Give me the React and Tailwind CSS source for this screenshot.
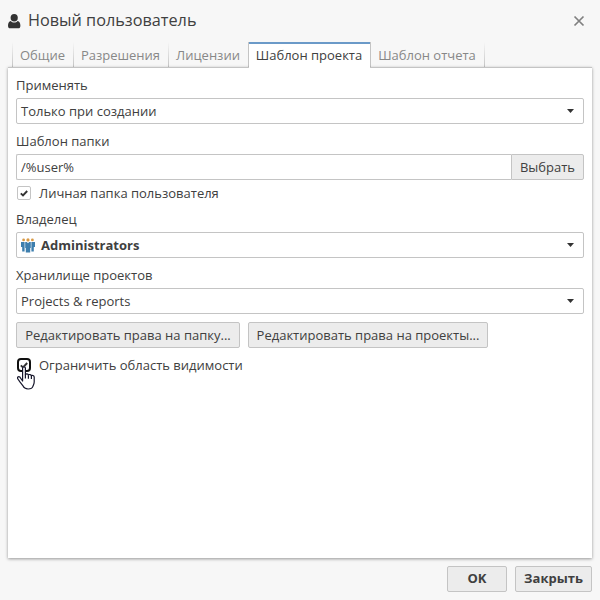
import { useState } from "react";

const tabs = [
  { label: "Общие", width: "w-[61px]" },
  { label: "Разрешения", width: "w-[95px]" },
  { label: "Лицензии", width: "w-[80px]" },
  { label: "Шаблон проекта", width: "w-[122px]" },
  { label: "Шаблон отчета", width: "w-[114px]" },
];

const UserIcon = () => (
  <svg width="13" height="15" viewBox="0 0 13 15" fill="#333" className="shrink-0">
    <ellipse cx="6.2" cy="3.8" rx="3.6" ry="3.8" />
    <path d="M2.8 7C1 7.4 0 9.2 0 11.7c0 1.6.8 2.6 2.1 2.6h8.2c1.3 0 2.1-1 2.1-2.6 0-2.5-1-4.3-2.8-4.7-1 1-2 1.5-3.4 1.5S3.8 8 2.8 7z" />
  </svg>
);

const GroupIcon = () => (
  <svg width="14" height="15" viewBox="0 0 14 15" className="mr-1.5 shrink-0">
    <g fill="#d99a45">
      <circle cx="2.6" cy="1.9" r="1.4" />
      <circle cx="11.4" cy="1.9" r="1.4" />
      <circle cx="7" cy="1.9" r="1.6" />
    </g>
    <g fill="#3e7fae">
      <path d="M0 4h3.6v9.5H1.2V9H0zM14 4h-3.6v9.5h2.4V9H14z" />
      <path d="M4.2 4h1.6L7 5.3 8.2 4h1.6v6h-.6v4.5H4.8V10h-.6z" />
    </g>
  </svg>
);

const HandCursor = () => (
  <svg
    width="19"
    height="24"
    viewBox="0 0 19 24"
    className="pointer-events-none absolute left-px top-[14px]"
  >
    <path
      d="M5.6 15V2.2c0-1.9 2.8-1.9 2.8 0v6.5c.4-1.2 2.8-1 3 .4.5-1 2.8-.7 3 .7.6-.8 2.8-.3 2.8 1.3v5c0 2-.8 2.7-1.3 4.3-.5 1.7-2.2 2.6-4.8 2.6-2.7 0-4.4-1.3-5.3-3.4L2.9 15.9.9 13c-1.1-1.6.5-3 2-1.9z"
      fill="#fff"
      stroke="#15152a"
      strokeWidth="1.2"
      strokeLinejoin="round"
    />
    <path d="M8.4 8.5v4M11.4 9.3v3.4M14.4 10v3" stroke="#15152a" strokeWidth="1.2" />
  </svg>
);

const Field = ({ label, children }) => (
  <div>
    <div className="h-[26px] pt-1 leading-[18px]">{label}</div>
    {children}
  </div>
);

const Select = ({ children }) => (
  <button className="flex h-[26px] w-full items-center rounded-[2px] border border-[#c4c4c4] bg-white pl-1 pr-[9px] text-left">
    {children}
    <svg width="7" height="4" viewBox="0 0 7 4" className="ml-auto">
      <path d="M0 0h7L3.5 4z" fill="#333" />
    </svg>
  </button>
);

const Checkbox = ({ label, checked, onChange, focused, children }) => (
  <label className="relative flex h-[26px] items-center pl-px">
    <input type="checkbox" className="sr-only" checked={checked} onChange={onChange} />
    <span
      className={`flex size-[14px] items-center justify-center bg-white ${
        focused
          ? "rounded-[4px] border-2 border-[#101010]"
          : "rounded-[2px] border border-[#c4c4c4]"
      }`}
    >
      {checked && (
        <svg width="8" height="7" viewBox="0 0 8 7" className="shrink-0">
          <path d="M.8 3.4 3 5.5 7.2 1" fill="none" stroke="#333" strokeWidth="1.9" />
        </svg>
      )}
    </span>
    <span className="ml-2">{label}</span>
    {children}
  </label>
);

const Button = ({ className = "", children }) => (
  <button
    className={`h-[26px] whitespace-nowrap rounded-[2px] border border-[#c4c4c4] bg-[#ececec] ${className}`}
  >
    {children}
  </button>
);

const App = () => {
  const [activeTab, setActiveTab] = useState(3);
  const [personalFolder, setPersonalFolder] = useState(true);
  const [limitScope, setLimitScope] = useState(true);

  return (
    <div className="flex h-[600px] w-[600px] flex-col bg-[#f7f7f7] font-['Open_Sans','Noto_Sans',sans-serif] text-[13px] leading-[18px] text-[#404040]">
      {/* Header */}
      <div className="flex h-[42px] shrink-0 items-center pl-2 pr-[15px]">
        <UserIcon />
        <h1 className="ml-[7px] pb-[2px] text-[16.25px] leading-6">Новый пользователь</h1>
        <button className="ml-auto" aria-label="Закрыть окно">
          <svg width="12" height="12" viewBox="0 0 12 12" className="block">
            <path d="m1.5 1.5 9 9m0-9-9 9" stroke="#808080" strokeWidth="1.7" />
          </svg>
        </button>
      </div>

      {/* Tabs */}
      <div className="flex h-[25px] shrink-0 pl-3">
        {tabs.map((tab, index) => (
          <div key={tab.label} className={`flex shrink-0 ${tab.width}`}>
            <span
              className={`w-px shrink-0 ${
                index === activeTab || index === activeTab + 1
                  ? "bg-[#c4c4c4]"
                  : "bg-linear-to-b from-[#f7f7f7] to-[#c4c4c4]"
              }`}
            />
            <button
              onClick={() => setActiveTab(index)}
              className={`relative flex-1 whitespace-nowrap pr-px ${
                index === activeTab
                  ? "-mb-px border-t-2 border-[#6b9ac8] bg-white pb-[3px]"
                  : "pb-px pt-[2px] text-[#888]"
              }`}
            >
              {tab.label}
            </button>
          </div>
        ))}
        <span className="w-px bg-linear-to-b from-[#f7f7f7] to-[#c4c4c4]" />
      </div>

      {/* Project template */}
      <div className="mx-2 h-[491px] shrink-0 border-t border-[#c4c4c4] bg-white px-2 pt-1 shadow-[0_1px_3px_rgba(0,0,0,0.4)]">
        <div className="flex flex-col gap-1">
          <Field label="Применять">
            <Select>Только при создании</Select>
          </Field>
          <Field label="Шаблон папки">
            <div className="flex">
              <input
                defaultValue="/%user%"
                className="h-[26px] min-w-0 flex-1 rounded-l-[2px] border border-r-0 border-[#c4c4c4] bg-white px-1 outline-none"
              />
              <Button className="w-[73px] rounded-l-none">Выбрать</Button>
            </div>
          </Field>
        </div>
        <Checkbox
          label="Личная папка пользователя"
          checked={personalFolder}
          onChange={(e) => setPersonalFolder(e.target.checked)}
        />
        <div className="flex flex-col gap-1">
          <Field label="Владелец">
            <Select>
              <GroupIcon />
              <b>Administrators</b>
            </Select>
          </Field>
          <Field label="Хранилище проектов">
            <Select>Projects &amp; reports</Select>
          </Field>
        </div>
        <div className="mb-1 mt-2 flex gap-2">
          <Button className="w-[224px]">Редактировать права на папку...</Button>
          <Button className="w-[240px]">Редактировать права на проекты...</Button>
        </div>
        <Checkbox
          label="Ограничить область видимости"
          checked={limitScope}
          onChange={(e) => setLimitScope(e.target.checked)}
          focused
        >
          <HandCursor />
        </Checkbox>
      </div>

      {/* Footer */}
      <div className="mt-2 flex justify-end gap-2 pr-2">
        <Button className="w-[60px] pb-[2px] font-bold">OK</Button>
        <Button className="w-[77px] pb-[2px] font-bold">Закрыть</Button>
      </div>
    </div>
  );
};

export default App;
